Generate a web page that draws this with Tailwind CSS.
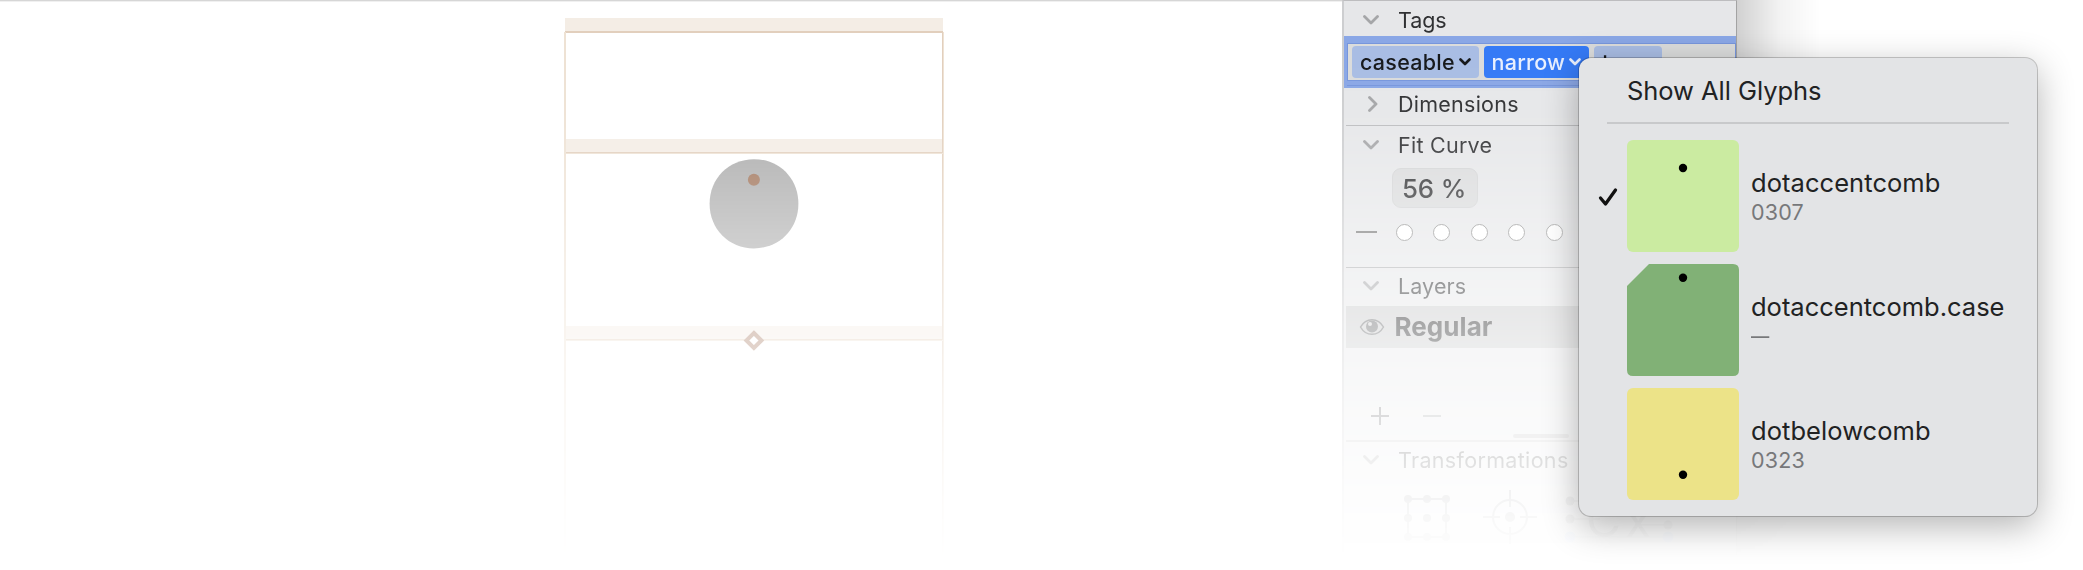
<!DOCTYPE html>
<html lang="en">
<head>
<meta charset="utf-8">
<title>Glyph editor</title>
<script src="https://cdn.jsdelivr.net/npm/@tailwindcss/browser@4"></script>
</head>
<body class="bg-white">
<div class="relative w-[2083px] h-[570px] overflow-hidden bg-white font-['Inter','Liberation_Sans',sans-serif]">
  <!-- editor window, fading out towards the bottom -->
  <div class="flex h-[570px] w-full [mask-image:linear-gradient(to_bottom,#000_60px,rgba(0,0,0,.97)_105px,rgba(0,0,0,.88)_145px,rgba(0,0,0,.62)_232px,rgba(0,0,0,.39)_325px,rgba(0,0,0,.23)_400px,rgba(0,0,0,.14)_460px,rgba(0,0,0,.07)_505px,transparent_560px)]">
    <!-- canvas -->
    <main class="w-[1342px] h-full border-t border-[#d6d6d6]">
      <svg class="block" width="1342" height="569" viewBox="0 1 1342 569">
        <rect x="0" y="1" width="1342" height="1" fill="#f0f0f0"/>
        <g fill="#f4ede5">
          <rect x="565" y="18" width="378" height="13"/>
          <rect x="565" y="139" width="378" height="13"/>
          <rect x="565" y="326" width="378" height="13"/>
        </g>
        <g fill="#e2cfbd">
          <rect x="565" y="31" width="378" height="2"/>
          <rect x="565" y="152" width="378" height="1"/>
          <rect x="565" y="339" width="378" height="1"/>
          <rect x="942" y="32" width="1" height="538"/>
        </g>
        <g fill="#eee2d4">
          <rect x="564" y="32" width="2" height="538"/>
          <rect x="565" y="153" width="378" height="1"/>
          <rect x="565" y="340" width="378" height="1"/>
          <rect x="943" y="32" width="1" height="538"/>
        </g>
        <path d="M754 159.2C779.5 159.2 798.4 178.6 798.4 203.8C798.4 229 779.5 248.4 754 248.4C728.500 248.400 709.600 229 709.600 203.800C709.600 178.600 728.500 159.200 754 159.200Z" fill="#adadad"/>
        <circle cx="753.900" cy="179.800" r="6" fill="#a0745a"/>
        <path d="M753.900 333L761.400 340.500L753.900 348L746.400 340.500Z" fill="#fff" stroke="#ab8069" stroke-width="4"/>
      </svg>
    </main>

    <!-- inspector -->
    <aside class="w-[395px] h-full flex flex-col bg-[#e6e7e9] border-l-2 border-l-[#cdced0] border-r border-r-[#a3a3a3] border-t border-t-[#bdbdbf] text-[21.500px] leading-[26px] text-[#303133] tracking-[-0.1px]">
      <div class="h-[35px] flex items-center pt-[3px] pl-[19px] gap-[19px]">
        <svg width="16" height="10" viewBox="0 0 16 10" fill="none" stroke="#a5a6a8" stroke-width="2.800" stroke-linecap="round" stroke-linejoin="round"><path d="M1.500 1.500L8 8L14.500 1.500"/></svg>
        <span>Tags</span>
      </div>
      <div class="h-[52px] bg-[#8aa7e6] pt-[7px] pl-[3px]">
        <div class="h-[38px] flex items-center gap-[5px] pl-[4px] border border-[#7796dc] bg-[#dbdcdc] text-[21.500px] tracking-[0.250px]">
          <div class="w-[127px] h-[32px] rounded-[4px] bg-[#a9bde4] flex items-center justify-between pl-[8px] pr-[8px] text-[#17191c] font-[450]">
            <span>caseable</span>
            <svg width="12" height="8" viewBox="0 0 12 8" fill="none" stroke="#17191c" stroke-width="2.600" stroke-linecap="round" stroke-linejoin="round"><path d="M1.500 1.500L6 6L10.500 1.500"/></svg>
          </div>
          <div class="w-[105px] h-[32px] rounded-[4px] bg-[#357af6] flex items-center justify-between pl-[7.500px] pr-[8px] text-[#e9f0fe] font-[450]">
            <span>narrow</span>
            <svg width="12" height="8" viewBox="0 0 12 8" fill="none" stroke="#e9f0fe" stroke-width="2.600" stroke-linecap="round" stroke-linejoin="round"><path d="M1.500 1.500L6 6L10.500 1.500"/></svg>
          </div>
          <div class="w-[68px] h-[32px] rounded-[4px] bg-[#a9bde4] flex items-center pl-[8px] text-[#17191c] font-[450]">top</div>
        </div>
        <div class="h-px mt-[4px] bg-[#7796dc]"></div>
      </div>
      <div class="h-[37px] flex items-center pl-[19px] gap-[19px] pb-[6px]">
        <svg width="16" height="16" viewBox="0 0 16 16" fill="none" stroke="#a5a6a8" stroke-width="2.800" stroke-linecap="round" stroke-linejoin="round"><path d="M6.500 1.500L13 8L6.500 14.500"/></svg>
        <span class="tracking-[0.250px]">Dimensions</span>
      </div>
      <div class="h-px ml-[2px] bg-[#bcbdbf]"></div>
      <div class="h-[39px] flex items-center pl-[19px] gap-[19px] pb-[2px]">
        <svg width="16" height="10" viewBox="0 0 16 10" fill="none" stroke="#a5a6a8" stroke-width="2.800" stroke-linecap="round" stroke-linejoin="round"><path d="M1.500 1.500L8 8L14.500 1.500"/></svg>
        <span class="tracking-[0.250px]">Fit Curve</span>
      </div>
      <div class="mt-[3px] ml-[48px] w-[86px] h-[40px] rounded-[9px] border border-[#d3d4d5] bg-[#dadbdc] flex items-center pl-[9px] pt-[1px] text-[25.800px] font-[450]">56 %</div>
      <div class="mt-[15px] ml-[12px] h-[18px] flex items-center">
        <div class="w-[21px] h-[2px] bg-[#777]"></div>
        <div class="ml-[18.500px] flex gap-[20.500px]">
          <div class="w-[17px] h-[17px] rounded-full bg-white border border-[#929292]"></div>
          <div class="w-[17px] h-[17px] rounded-full bg-white border border-[#929292]"></div>
          <div class="w-[17px] h-[17px] rounded-full bg-white border border-[#929292]"></div>
          <div class="w-[17px] h-[17px] rounded-full bg-white border border-[#929292]"></div>
          <div class="w-[17px] h-[17px] rounded-full bg-white border border-[#929292]"></div>
        </div>
      </div>
      <div class="h-px mt-[26px] ml-[2px] bg-[#aeafb1]"></div>
      <div class="h-[38px] flex items-center pl-[19px] gap-[19px] pb-[2px]">
        <svg width="16" height="10" viewBox="0 0 16 10" fill="none" stroke="#a5a6a8" stroke-width="2.800" stroke-linecap="round" stroke-linejoin="round"><path d="M1.500 1.500L8 8L14.500 1.500"/></svg>
        <span class="tracking-[0.100px]">Layers</span>
      </div>
      <div class="h-[42px] ml-[2px] bg-[#c9cacb] flex items-center pl-[13px] gap-[9.500px]">
        <svg width="26" height="18" viewBox="0 0 26 18" fill="none" stroke="#66686a" stroke-width="1.500"><path d="M1.500 9C7 -.8 19 -.8 24.500 9C19 18.800 7 18.800 1.500 9Z"/><circle cx="13" cy="8.500" r="6" fill="#66686a" stroke="none"/><circle cx="11" cy="6" r="2" fill="#d3d3d4" stroke="none"/></svg>
        <span class="text-[26px] font-bold tracking-[0.050px] text-[#202122]">Regular</span>
      </div>
      <div class="h-[86px] flex items-center pt-[49px] pl-[27px]">
        <svg width="70" height="18" viewBox="0 0 70 18" class="shrink-0"><path d="M0 9H18M9 0V18" stroke="#55575a" stroke-width="2"/><path d="M52 9H70" stroke="#97999b" stroke-width="2"/></svg>
      </div>
      <div class="h-[4px] w-[56px] ml-[169px] rounded-full bg-[#b5b6b7]"></div>
      <div class="h-[2px] mt-[2px] ml-[2px] bg-[#bcbdbf]"></div>
      <div class="h-[38px] flex items-center pl-[19px] gap-[19px] pb-[2px]">
        <svg width="16" height="10" viewBox="0 0 16 10" fill="none" stroke="#8f9092" stroke-width="2.800" stroke-linecap="round" stroke-linejoin="round"><path d="M1.500 1.500L8 8L14.500 1.500"/></svg>
        <span class="tracking-[0.330px] text-[#202122]">Transformations</span>
      </div>
      <svg width="390" height="90" viewBox="1344 480 390 90" class="shrink-0">
        <g fill="#77797b" stroke="#77797b">
          <path d="M1408 499H1446V537H1408Z" fill="none" stroke-width="2"/>
          <g stroke="none"><circle cx="1408" cy="499" r="4"/><circle cx="1427" cy="499" r="4"/><circle cx="1446" cy="499" r="4"/><circle cx="1408" cy="518" r="4"/><circle cx="1427" cy="518" r="4"/><circle cx="1446" cy="518" r="4"/><circle cx="1408" cy="537" r="4"/><circle cx="1427" cy="537" r="4"/><circle cx="1446" cy="537" r="4"/></g>
          <circle cx="1510" cy="517" r="17" fill="none" stroke-width="2"/>
          <path d="M1510 490V507M1510 527V544M1483 517H1500M1520 517H1537" stroke-width="2"/>
          <circle cx="1510" cy="517" r="5" stroke="none"/>
          <path d="M1570 501H1668M1570 519H1600M1640 525H1668M1570 537H1668" stroke-width="1"/>
          <circle cx="1570" cy="501" r="4.500" stroke="none"/><circle cx="1570" cy="519" r="4.500" stroke="none"/><circle cx="1668" cy="525" r="4.500" stroke="none"/>
        </g>
        <circle cx="1570" cy="537" r="5.500" fill="#7fa2ee"/><circle cx="1668" cy="537" r="5.500" fill="#7fa2ee"/>
        <text x="1586" y="537" font-size="48" font-family="Inter" fill="#77797b" letter-spacing="4">Cx</text>
      </svg>
    </aside>
    <div class="w-[84px] h-full bg-linear-to-r from-black/18 via-black/5 to-transparent"></div>
  </div>

  <!-- tag glyph menu -->
  <div class="absolute left-[1579px] top-[58px] w-[458px] h-[458px] rounded-[12px] bg-[#e3e4e6] shadow-[0_0_0_1px_rgba(0,0,0,0.2),0_10px_36px_rgba(0,0,0,0.3)] text-[25.500px] leading-[32px] text-[#212223]">
    <div class="h-[64px] pl-[48px] pt-[17px] tracking-[-0.050px]">Show All Glyphs</div>
    <div class="h-[2px] ml-[28px] w-[402px] bg-[#c8c9cb]"></div>
    <div class="mt-[16px] flex flex-col gap-[12px]">
      <div class="h-[112px] flex items-center">
        <svg class="ml-[19px] mr-[9px] mt-[2px]" width="20" height="20" viewBox="0 0 20 20" fill="none" stroke="#111" stroke-width="3.300" stroke-linecap="round" stroke-linejoin="round"><path d="M2.500 11L7.500 17L17.500 3"/></svg>
        <svg width="112" height="112"><rect width="112" height="112" rx="6" fill="#cbeba1"/><circle cx="56" cy="28" r="4.200"/></svg>
        <div class="ml-[12px]"><div class="tracking-[0.060px]">dotaccentcomb</div><div class="text-[21.500px] leading-[26px] text-[#77787a] tracking-[0.150px]">0307</div></div>
      </div>
      <div class="h-[112px] flex items-center pl-[48px]">
        <svg width="112" height="112"><path d="M22 0H106Q112 0 112 6V106Q112 112 106 112H6Q0 112 0 106V22Z" fill="#81b176"/><circle cx="56" cy="13.700" r="4.200"/></svg>
        <div class="ml-[12px]"><div>dotaccentcomb.case</div><div class="text-[21.500px] leading-[26px] text-[#77787a]"><span class="inline-block origin-left scale-x-85">—</span></div></div>
      </div>
      <div class="h-[112px] flex items-center pl-[48px]">
        <svg width="112" height="112"><rect width="112" height="112" rx="6" fill="#ece388"/><circle cx="56" cy="86.800" r="4.200"/></svg>
        <div class="ml-[12px]"><div class="tracking-[0.060px]">dotbelowcomb</div><div class="text-[21.500px] leading-[26px] text-[#77787a] tracking-[0.150px]">0323</div></div>
      </div>
    </div>
  </div>
</div>
</body>
</html>
